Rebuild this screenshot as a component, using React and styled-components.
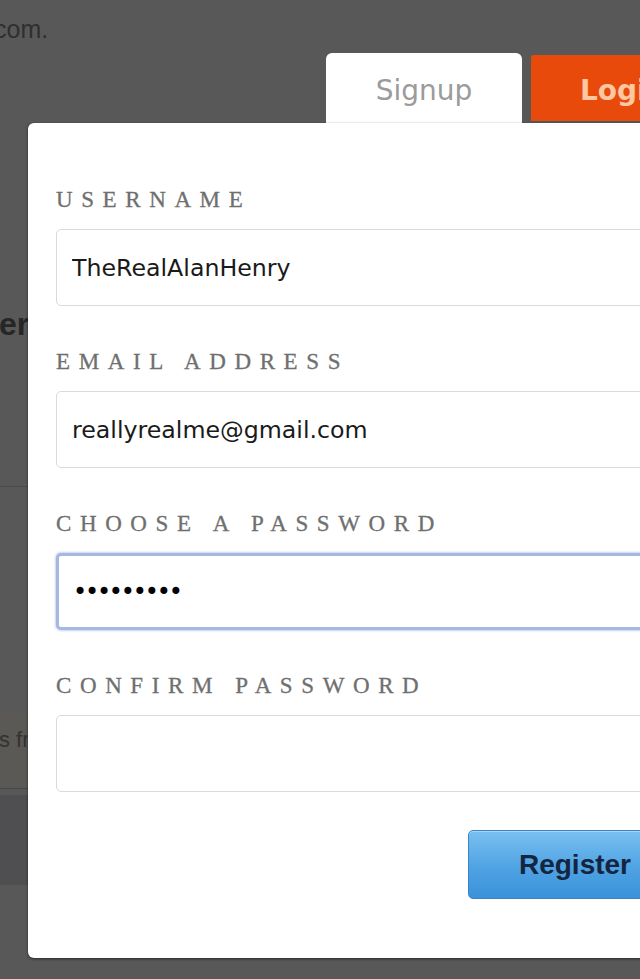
import React from 'react'
import styled, { createGlobalStyle } from 'styled-components'

const GlobalStyle = createGlobalStyle`
  html, body {
    margin: 0;
    padding: 0;
    overflow: hidden;
  }
  body {
    font-family: 'Liberation Sans', Arial, sans-serif;
  }
`

const Page = styled.div`
  position: relative;
  width: 640px;
  height: 979px;
  overflow: hidden;
  background: #585858;
`

const TopLine = styled.div`
  margin: 14px 0 0 -6px;
  font-size: 25px;
  line-height: 30px;
  color: #2f2f2f;
  white-space: nowrap;
`

const Heading = styled.h2`
  margin: 262px 0 0 -1px;
  font-size: 32px;
  line-height: 36px;
  font-weight: 700;
  color: #262626;
  white-space: nowrap;
`

const Rule = styled.hr`
  margin: 144px 0 0;
  border: none;
  border-top: 1px solid #4b4b4b;
`

const Notice = styled.div`
  margin-top: 226px;
  height: 61px;
  padding: 14px 0 0 0;
  background: #5a5955;
  border-bottom: 1px solid #474747;
  font-size: 22px;
  line-height: 26px;
  color: #333;
  white-space: nowrap;
  text-indent: -1px;
`

const DarkBand = styled.div`
  margin-top: 6px;
  height: 90px;
  background: #4f4f51;
`

const Modal = styled.div`
  position: absolute;
  left: 28px;
  top: 53px;
  width: 700px;
  display: flex;
  flex-direction: column;
`

const Tabs = styled.div`
  display: flex;
  align-items: flex-end;
  gap: 9px;
  padding-left: 298px;
`

const Tab = styled.div`
  height: ${p => (p.$active ? '70px' : '66px')};
  margin-bottom: ${p => (p.$active ? '0' : '2px')};
  width: ${p => (p.$active ? '196px' : '160px')};
  display: flex;
  align-items: center;
  justify-content: ${p => (p.$active ? 'center' : 'flex-start')};
  padding-left: ${p => (p.$active ? '0' : '49px')};
  box-sizing: border-box;
  background: ${p => (p.$active ? '#fff' : '#e84a0c')};
  color: ${p => (p.$active ? '#9b9b9b' : '#fdc7a2')};
  font-family: 'DejaVu Sans', Verdana, sans-serif;
  font-size: 28px;
  font-weight: ${p => (p.$active ? 400 : 700)};
  border-radius: ${p => (p.$active ? '6px 6px 0 0' : '3px 3px 0 0')};
  padding-top: 4px;
`

const Panel = styled.div`
  background: #fff;
  border-radius: 6px;
  box-shadow: 0 1px 3px rgba(0, 0, 0, 0.55);
  padding: 65px 28px 59px;
`

const Field = styled.div`
  display: flex;
  flex-direction: column;
  gap: 18px;
  & + & {
    margin-top: 44px;
  }
`

const Label = styled.label`
  font-family: 'Liberation Serif', 'Times New Roman', serif;
  font-size: 23px;
  line-height: 23px;
  letter-spacing: 8.6px;
  text-transform: uppercase;
  color: #6f6f6f;
  -webkit-text-stroke: 0.3px #6f6f6f;
`

const Input = styled.input`
  box-sizing: border-box;
  width: 100%;
  height: 77px;
  padding: 0 15px;
  border: 1px solid #dadada;
  border-radius: 5px;
  font-family: 'DejaVu Sans', Verdana, sans-serif;
  font-size: 23.7px;
  color: #1a1a1a;
  background: #fff;
  outline: none;
  ${p =>
    p.$focused &&
    `
    border: 3px solid #a7b8df;
    box-shadow: 0 0 3px #8ea6d8;
    padding-left: 14px;
    letter-spacing: -2.2px;
    font-size: 24px;
    color: #000;
  `}
`

const Actions = styled.div`
  display: flex;
  justify-content: flex-end;
  margin-top: 38px;
`

const RegisterButton = styled.button`
  height: 69px;
  padding: 0 68px 0 50px;
  border: 1px solid #3a84c6;
  border-radius: 5px;
  background: linear-gradient(#79c0f1, #4fa3e3 55%, #3b92da);
  box-shadow: inset 0 1px 0 rgba(255, 255, 255, 0.35);
  font-family: 'Liberation Sans', Arial, sans-serif;
  font-size: 28px;
  font-weight: 700;
  color: #15253f;
  text-align: left;
`

const fields = [
  { label: 'Username', value: 'TheRealAlanHenry', type: 'text' },
  { label: 'Email Address', value: 'reallyrealme@gmail.com', type: 'text' },
  { label: 'Choose a Password', value: 'password1', type: 'password', focused: true },
  { label: 'Confirm Password', value: '', type: 'password' }
]

const App = () => (
  <>
    <GlobalStyle />
    <Page>
      <TopLine>com.</TopLine>
      <Heading>er</Heading>
      <Rule />
      <Notice>s from</Notice>
      <DarkBand />

      <Modal>
        <Tabs>
          <Tab $active>Signup</Tab>
          <Tab>Login</Tab>
        </Tabs>
        <Panel>
          {fields.map(f => (
            <Field key={f.label}>
              <Label>{f.label}</Label>
              <Input type={f.type} defaultValue={f.value} $focused={f.focused} readOnly />
            </Field>
          ))}
          <Actions>
            <RegisterButton>Register</RegisterButton>
          </Actions>
        </Panel>
      </Modal>
    </Page>
  </>
)

export default App
